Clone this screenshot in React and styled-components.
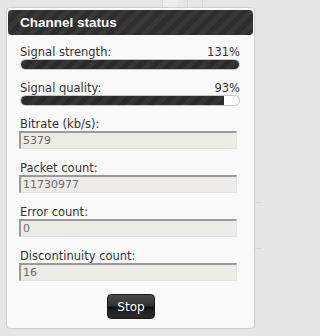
import React from 'react';
import styled, { createGlobalStyle } from 'styled-components';

const GlobalStyle = createGlobalStyle`
  html, body {
    margin: 0;
    padding: 0;
  }
  body {
    width: 262px;
    height: 336px;
    overflow: hidden;
    font-family: "DejaVu Sans", Verdana, sans-serif;
    background-color: #e5e5e5;
    background-image:
      linear-gradient(#d6d6d6, #d6d6d6),
      linear-gradient(#d6d6d6, #d6d6d6),
      linear-gradient(#d6d6d6, #d6d6d6),
      linear-gradient(#d6d6d6, #d6d6d6),
      linear-gradient(#d6d6d6, #d6d6d6),
      linear-gradient(#ececec, #ececec);
    background-size: 1px 7px, 1px 7px, 1px 7px, 12px 1px, 12px 1px, 15px 7px;
    background-position: 162px 0, 187px 0, 202px 0, 250px 202px, 250px 248px, 163px 0;
    background-repeat: no-repeat;
  }
`;

const Page = styled.div`
  padding: 7px 0 0 6px;
`;

const Panel = styled.div`
  width: 247px;
  height: 320px;
  box-sizing: content-box;
  background: #f9f9f9;
  border: 1px solid #cfcfcf;
  border-radius: 4px;
  display: flex;
  flex-direction: column;
`;

const Header = styled.div`
  margin: 2px 1px 0;
  height: 25px;
  border-radius: 4px;
  background: repeating-linear-gradient(
    -45deg,
    #2e2e2e 0px,
    #2e2e2e 5px,
    #383838 5px,
    #383838 10px
  );
  display: flex;
  align-items: center;
  padding-left: 12px;
  color: #fff;
  font-family: "Liberation Sans", Arial, sans-serif;
  font-weight: bold;
  font-size: 13.5px;
`;

const Body = styled.div`
  padding: 11px 14px 0 13px;
  display: flex;
  flex-direction: column;
`;

const Group = styled.div`
  display: flex;
  flex-direction: column;
  margin-bottom: ${p => p.$gap}px;
`;

const LabelRow = styled.div`
  display: flex;
  justify-content: space-between;
  height: 13px;
  line-height: 13px;
  font-size: 11.5px;
  color: #333;
`;

const Label = styled.span``;

const Bar = styled.div`
  height: 11px;
  box-sizing: border-box;
  border: 1px solid #c4c4c4;
  border-radius: 6px;
  background: #fff;
  overflow: hidden;
`;

const Fill = styled.div`
  height: 100%;
  background: repeating-linear-gradient(
    -45deg,
    #2a2a2a 0px,
    #2a2a2a 5px,
    #353535 5px,
    #353535 10px
  );
`;

const FieldLabel = styled.div`
  height: 14px;
  line-height: 14px;
  font-size: 11.5px;
  color: #333;
`;

const Field = styled.div`
  width: 218px;
  height: 18px;
  box-sizing: border-box;
  margin-left: -1px;
  background: #ecebe5;
  border-top: 2px solid #9a9a9a;
  border-left: 2px solid #9a9a9a;
  border-right: 1px solid #e2e2e2;
  border-bottom: 1px solid #e2e2e2;
  padding-left: 2px;
  font-size: 11px;
  line-height: 15px;
  color: #6a6a6a;
`;

const ButtonRow = styled.div`
  display: flex;
  justify-content: center;
  margin-top: 1px;
`;

const Button = styled.button`
  width: 48px;
  height: 25px;
  border: 1px solid #1a1a1a;
  border-radius: 4px;
  background: linear-gradient(
    to bottom,
    #4a4a4a 0%,
    #333 45%,
    #0d0d0d 55%,
    #222 70%,
    #2a2a2a 100%
  );
  color: #fff;
  font-family: "DejaVu Sans", Verdana, sans-serif;
  font-size: 12px;
  padding: 0;
  margin-left: 2px;
  cursor: pointer;
`;

const signals = [
  { label: 'Signal strength:', value: 131 },
  { label: 'Signal quality:', value: 93 },
];

const fields = [
  { label: 'Bitrate (kb/s):', value: '5379' },
  { label: 'Packet count:', value: '11730977' },
  { label: 'Error count:', value: '0' },
  { label: 'Discontinuity count:', value: '16' },
];

export default function App() {
  return (
    <>
      <GlobalStyle />
      <Page>
        <Panel>
          <Header>Channel status</Header>
          <Body>
            {signals.map((s, i) => (
              <Group key={s.label} $gap={i === 0 ? 12 : 11}>
                <LabelRow>
                  <Label>{s.label}</Label>
                  <Label>{s.value}%</Label>
                </LabelRow>
                <Bar>
                  <Fill style={{ width: `${Math.min(s.value, 100)}%` }} />
                </Bar>
              </Group>
            ))}
            {fields.map(f => (
              <Group key={f.label} $gap={12}>
                <FieldLabel>{f.label}</FieldLabel>
                <Field>{f.value}</Field>
              </Group>
            ))}
            <ButtonRow>
              <Button>Stop</Button>
            </ButtonRow>
          </Body>
        </Panel>
      </Page>
    </>
  );
}
